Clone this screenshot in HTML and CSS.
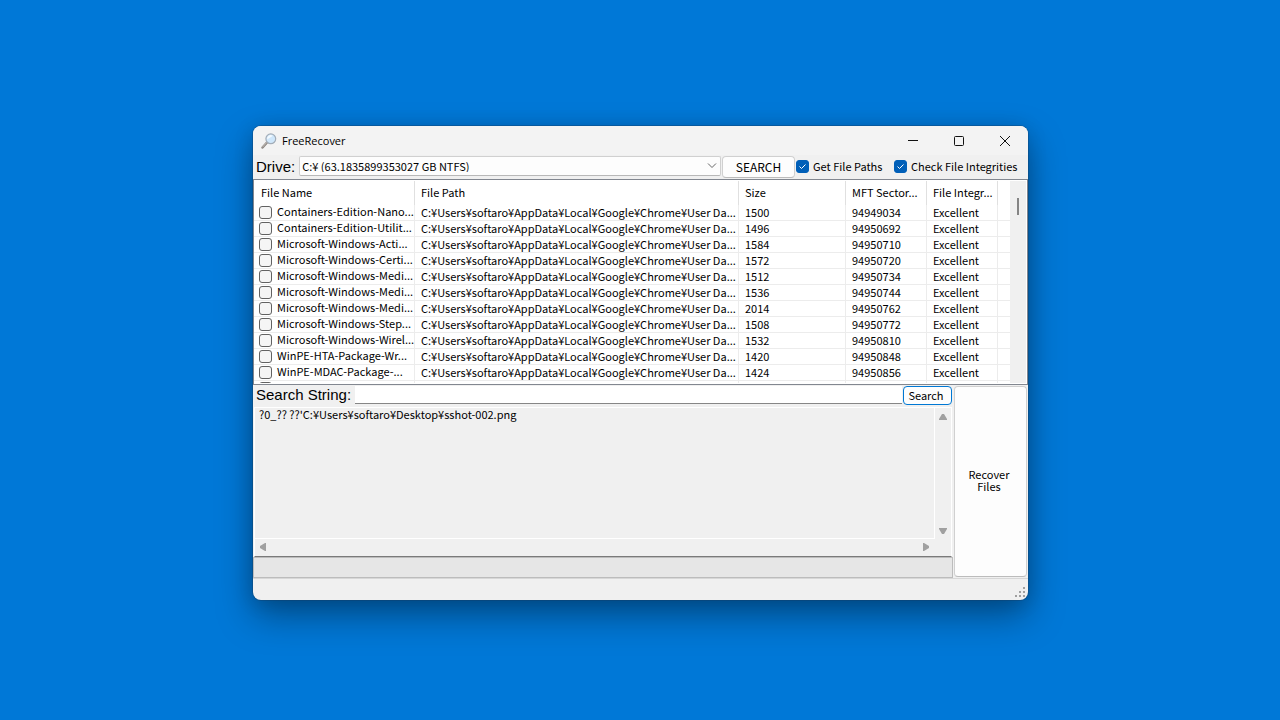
FILE: index.html
```
<!DOCTYPE html>
<html lang="en">
<head>
<meta charset="utf-8">
<title>FreeRecover</title>
<link rel="stylesheet" href="styles.css">
</head>
<body>
<main class="window">
  <header class="titlebar">
    <svg class="app-icon" width="16" height="16" viewBox="0 0 16 16">
      <path d="M1.500 14.500 6 9.500" stroke="#8a8480" stroke-width="2.400" stroke-linecap="round"/>
      <path d="M1.600 14 5.600 9.600" stroke="#c9c2bc" stroke-width="1" stroke-linecap="round"/>
      <circle cx="9.800" cy="5.800" r="4.900" fill="#cfe7fb" stroke="#a3adb8" stroke-width="1.200"/>
      <path d="M6.200 6.500a3.600 3.600 0 0 1 5.400-3.800C10.500 4 8 5 6.200 6.500z" fill="#f3faff"/>
    </svg>
    <h1 class="title">FreeRecover</h1>
    <div class="caption-buttons">
      <button class="caption" aria-label="Minimize"><svg width="12" height="12" viewBox="0 0 12 12"><path d="M1 5.500h10"/></svg></button>
      <button class="caption" aria-label="Maximize"><svg width="12" height="12" viewBox="0 0 12 12"><rect x="1.500" y="1.500" width="9" height="9" rx="1"/></svg></button>
      <button class="caption" aria-label="Close"><svg width="12" height="12" viewBox="0 0 12 12"><path d="M1 1l10 10M11 1 1 11"/></svg></button>
    </div>
  </header>

  <div class="toolbar">
    <label class="big-label" for="drive">Drive:</label>
    <select class="drive" id="drive"><option>C:¥ (63.1835899353027 GB NTFS)</option></select>
    <button class="button search-drive">SEARCH</button>
    <label class="check paths"><input class="tick" type="checkbox" checked>Get File Paths</label>
    <label class="check integrities"><input class="tick" type="checkbox" checked>Check File Integrities</label>
  </div>

  <section class="list">
    <div class="list-view">
      <table class="files">
        <colgroup><col class="c-name"><col><col class="c-size"><col class="c-sector"><col class="c-integrity"><col class="c-rest"></colgroup>
        <thead><tr><th>File Name</th><th>File Path</th><th>Size</th><th>MFT Sector...</th><th>File Integr...</th><th></th></tr></thead>
        <tbody>
          <tr><td><label class="file"><input class="tick" type="checkbox">Containers-Edition-Nano...</label></td><td>C:¥Users¥softaro¥AppData¥Local¥Google¥Chrome¥User Da...</td><td>1500</td><td>94949034</td><td>Excellent</td><td></td></tr>
          <tr><td><label class="file"><input class="tick" type="checkbox">Containers-Edition-Utilit...</label></td><td>C:¥Users¥softaro¥AppData¥Local¥Google¥Chrome¥User Da...</td><td>1496</td><td>94950692</td><td>Excellent</td><td></td></tr>
          <tr><td><label class="file"><input class="tick" type="checkbox">Microsoft-Windows-Acti...</label></td><td>C:¥Users¥softaro¥AppData¥Local¥Google¥Chrome¥User Da...</td><td>1584</td><td>94950710</td><td>Excellent</td><td></td></tr>
          <tr><td><label class="file"><input class="tick" type="checkbox">Microsoft-Windows-Certi...</label></td><td>C:¥Users¥softaro¥AppData¥Local¥Google¥Chrome¥User Da...</td><td>1572</td><td>94950720</td><td>Excellent</td><td></td></tr>
          <tr><td><label class="file"><input class="tick" type="checkbox">Microsoft-Windows-Medi...</label></td><td>C:¥Users¥softaro¥AppData¥Local¥Google¥Chrome¥User Da...</td><td>1512</td><td>94950734</td><td>Excellent</td><td></td></tr>
          <tr><td><label class="file"><input class="tick" type="checkbox">Microsoft-Windows-Medi...</label></td><td>C:¥Users¥softaro¥AppData¥Local¥Google¥Chrome¥User Da...</td><td>1536</td><td>94950744</td><td>Excellent</td><td></td></tr>
          <tr><td><label class="file"><input class="tick" type="checkbox">Microsoft-Windows-Medi...</label></td><td>C:¥Users¥softaro¥AppData¥Local¥Google¥Chrome¥User Da...</td><td>2014</td><td>94950762</td><td>Excellent</td><td></td></tr>
          <tr><td><label class="file"><input class="tick" type="checkbox">Microsoft-Windows-Step...</label></td><td>C:¥Users¥softaro¥AppData¥Local¥Google¥Chrome¥User Da...</td><td>1508</td><td>94950772</td><td>Excellent</td><td></td></tr>
          <tr><td><label class="file"><input class="tick" type="checkbox">Microsoft-Windows-Wirel...</label></td><td>C:¥Users¥softaro¥AppData¥Local¥Google¥Chrome¥User Da...</td><td>1532</td><td>94950810</td><td>Excellent</td><td></td></tr>
          <tr><td><label class="file"><input class="tick" type="checkbox">WinPE-HTA-Package-Wr...</label></td><td>C:¥Users¥softaro¥AppData¥Local¥Google¥Chrome¥User Da...</td><td>1420</td><td>94950848</td><td>Excellent</td><td></td></tr>
          <tr><td><label class="file"><input class="tick" type="checkbox">WinPE-MDAC-Package-...</label></td><td>C:¥Users¥softaro¥AppData¥Local¥Google¥Chrome¥User Da...</td><td>1424</td><td>94950856</td><td>Excellent</td><td></td></tr>
          <tr><td><label class="file"><input class="tick" type="checkbox" aria-label="Next file"></label></td><td></td><td></td><td></td><td></td><td></td></tr>
        </tbody>
      </table>
    </div>
    <div class="list-scroll"><div class="thumb"></div></div>
  </section>

  <div class="lower">
    <div class="left">
      <div class="search-row">
        <label class="big-label" for="query">Search String:</label>
        <input class="query" id="query" type="text">
        <button class="button search">Search</button>
      </div>
      <div class="log">
        <div class="log-text">?0_?? ??'C:¥Users¥softaro¥Desktop¥sshot-002.png</div>
        <div class="v-scroll">
          <svg width="10" height="8" viewBox="0 0 10 8"><path d="M4 1h2l3 5v1H1V6z"/></svg>
          <svg width="10" height="8" viewBox="0 0 10 8"><path d="M4 7h2l3-5V1H1v1z"/></svg>
        </div>
        <div class="h-scroll">
          <svg width="8" height="10" viewBox="0 0 8 10"><path d="M1 4v2l5 3h1V1H6z"/></svg>
          <svg width="8" height="10" viewBox="0 0 8 10"><path d="M7 4v2L2 9H1V1h1z"/></svg>
        </div>
      </div>
      <div class="progress" role="progressbar" aria-label="Progress"></div>
    </div>
    <button class="button recover">Recover<br>Files</button>
  </div>

  <footer class="status">
    <svg width="11" height="11" viewBox="0 0 11 11"><path d="M8 0h2v2H8zM4 4h2v2H4zM8 4h2v2H8zM0 8h2v2H0zM4 8h2v2H4zM8 8h2v2H8z"/></svg>
  </footer>
</main>
</body>
</html>
```
FILE: styles.css
```
* { box-sizing: border-box; }
body {
  margin: 0;
  min-height: 100vh;
  padding: 126px 252px 120px 253px;
  display: flex;
  background: #0078d7;
  color: #000;
  font: 11px/12px "Noto Sans CJK JP", sans-serif;
}
button, input, select { font: inherit; color: inherit; margin: 0; }
.window {
  flex: 1;
  min-width: 0;
  display: flex;
  flex-direction: column;
  background: #f0f0f0;
  border-radius: 8px;
  overflow: hidden;
  box-shadow: 0 0 0 1px rgba(20, 60, 100, .35), 0 16px 36px rgba(0, 0, 0, .36), 0 2px 20px rgba(0, 0, 0, .14);
}
.titlebar {
  display: flex;
  align-items: center;
  height: 29px;
  padding-left: 8px;
  background: #f3f3f3;
}
.app-icon { fill: none; }
.title { margin: 0 auto 0 5px; font: 11px/16px "Open Sans", sans-serif; }
.caption-buttons { display: flex; }
.caption {
  width: 46px;
  height: 28px;
  padding: 0;
  border: 0;
  background: none;
  display: grid;
  place-items: center;
}
.caption svg { fill: none; stroke: #111; }
.toolbar { display: flex; align-items: center; height: 24px; padding: 0 0 0 3px; }
.big-label { font: 15px/18px "Liberation Sans", sans-serif; padding-bottom: 1px; }
.drive {
  flex: 1;
  min-width: 0;
  height: 20px;
  margin: 0 1px 2px 4px;
  padding: 0 2px 1px;
  border: 1px solid #d0d0d0;
  border-bottom-color: #b8b8b8;
  border-radius: 2px;
  appearance: none;
  background: #fdfdfd url("data:image/svg+xml,%3Csvg xmlns='http://www.w3.org/2000/svg' width='10' height='6'%3E%3Cpath d='M1 .5l4 4 4-4' fill='none' stroke='%23666'/%3E%3C/svg%3E") no-repeat right 3px center;
}
.button {
  padding: 0;
  border: 1px solid #d0d0d0;
  border-bottom-color: #bcbcbc;
  border-radius: 4px;
  background: #fdfdfd;
}
.search-drive { width: 73px; height: 22px; padding-bottom: 1px; font-size: 12px; }
.check { display: flex; align-items: flex-start; gap: 4px; margin-left: 1px; padding-bottom: 1px; }
.paths { width: 97px; }
.integrities { width: 134px; }
.tick {
  flex: none;
  width: 13px;
  height: 13px;
  appearance: none;
  border: 1px solid #626262;
  border-radius: 3px;
  background: #f5f5f5;
}
.tick:checked {
  border-color: #005fb8;
  background: #005fb8 url("data:image/svg+xml,%3Csvg xmlns='http://www.w3.org/2000/svg' width='11' height='11'%3E%3Cpath d='M2.500 5.500l2 2 4-4' fill='none' stroke='%23fff'/%3E%3C/svg%3E") no-repeat center;
}
.list {
  display: flex;
  height: 206px;
  border: 1px solid #828790;
  padding: 1px 1px 1px 0;
  background: #fff;
}
.list-view { flex: 1; min-width: 0; overflow: hidden; }
.files { width: 100%; table-layout: fixed; border-collapse: separate; border-spacing: 0; }
.c-name { width: 161px; }
.c-size { width: 107px; }
.c-sector { width: 81px; }
.c-integrity { width: 71px; }
.c-rest { width: 12px; }
.files th, .files td { padding: 0 0 2px 6px; text-align: left; font-weight: 400; white-space: nowrap; border-right: 1px solid #ececec; }
.files th { height: 24px; border-color: #e0e0e0; }
.files td { height: 16px; border-bottom: 1px solid #ececec; }
.files th:first-child { padding-left: 7px; }
.files td:first-child { padding: 0 0 0 5px; }
.files th:last-child, .files td:last-child { border-right: 0; }
.file { display: flex; align-items: flex-start; gap: 5px; height: 15px; }
.file .tick { margin-top: 1px; }
.list-scroll { width: 16px; background: #f0f0f0; padding: 17px 7px 0; }
.thumb { width: 2px; height: 17px; background: #858585; }
.lower { flex: 1; display: flex; gap: 1px; padding: 1px 1px 0 0; }
.left { flex: 1; min-width: 0; display: flex; flex-direction: column; }
.search-row { display: flex; align-items: center; height: 19px; padding: 0 1px 0 3px; }
.query { flex: 1; min-width: 0; height: 18px; margin: 0 1px 1px 4px; border: 0; border-bottom: 1px solid #868686; background: #fff; }
.search { width: 49px; height: 19px; border-color: #0078d4; padding: 0 3px 2px 0; }
.log {
  flex: 1;
  margin: 2px 1px 0;
  display: grid;
  grid-template-columns: 1fr 16px;
  grid-template-rows: 1fr 17px;
  border: 1px solid #fff;
  border-bottom-color: #7a7a7a;
}
.log-text { padding: 0 4px; border: solid #fff; border-width: 0 1px 1px 0; }
.v-scroll, .h-scroll { display: flex; justify-content: space-between; }
.v-scroll { flex-direction: column; align-items: center; padding: 5px 0 4px; }
.h-scroll { align-items: center; padding: 0 5px 1px 4px; }
.log svg, .status svg { fill: #a0a0a0; }
.progress { height: 21px; border: 1px solid #bcbcbc; background: #e6e6e6; }
.recover { width: 73px; margin-bottom: 1px; padding: 0 3px 3px 0; }
.status { display: flex; justify-content: flex-end; align-items: flex-end; height: 22px; padding: 0 2px 2px; border-top: 1px solid #d7d7d7; }
```
